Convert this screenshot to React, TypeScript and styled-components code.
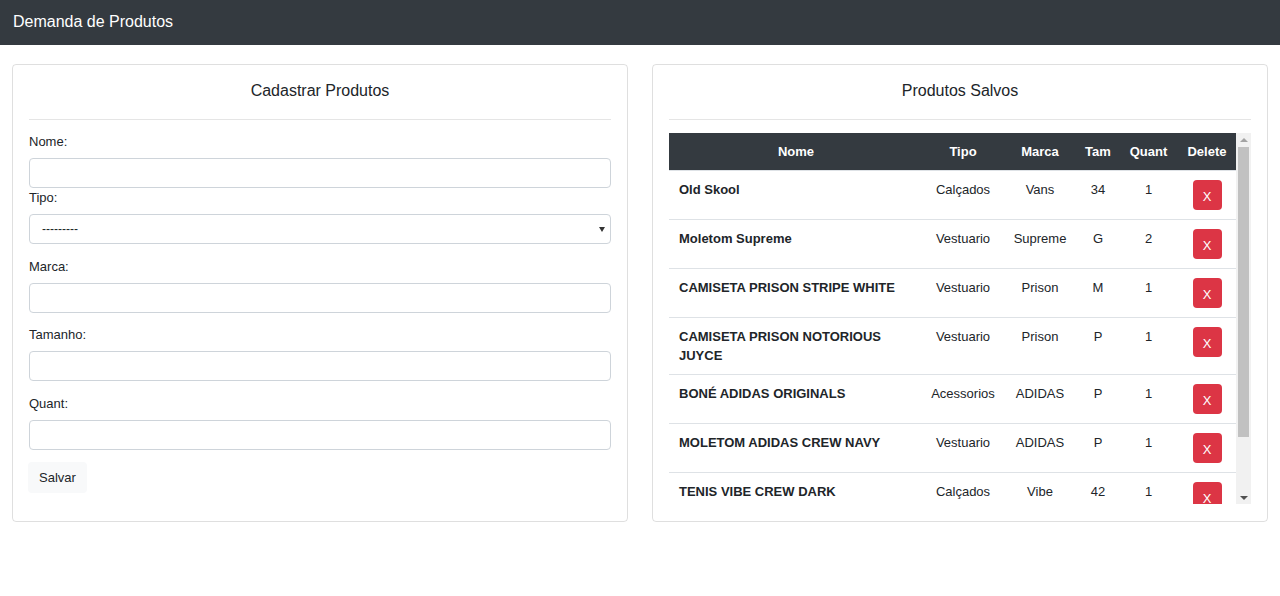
import React from "react";
import styled, { createGlobalStyle } from "styled-components";

const GlobalStyle = createGlobalStyle`
  * { box-sizing: border-box; }
  html, body { margin: 0; padding: 0; background: #fff; }
  body {
    font-family: "Liberation Sans", Arial, Helvetica, sans-serif;
    font-size: 13px;
    line-height: 1.5;
    color: #212529;
  }
`;

const NavBar = styled.header`
  height: 45px;
  background: #343a40;
  display: flex;
  align-items: center;
  padding: 0 13px;
  padding-bottom: 2px;
`;

const Brand = styled.span`
  color: #fff;
  font-size: 16px;
  line-height: 20px;
`;

const Main = styled.main`
  display: grid;
  grid-template-columns: 1fr 1fr;
  gap: 24px;
  padding: 19px 12px 0;
`;

const Card = styled.section`
  border: 1px solid rgba(0, 0, 0, 0.125);
  border-radius: 4px;
  padding: 16px 16px 29px;
  height: 458px;
`;

const CardTitle = styled.h2`
  margin: 0;
  font-size: 16px;
  font-weight: 400;
  line-height: 20px;
  text-align: center;
`;

const Divider = styled.hr`
  border: 0;
  border-top: 1px solid rgba(0, 0, 0, 0.1);
  margin: 18px 0 0;
`;

const Form = styled.form`
  display: flex;
  flex-direction: column;
  padding-top: 12px;
`;

const Group = styled.div<{ $tight?: boolean }>`
  display: flex;
  flex-direction: column;
  margin-bottom: ${(p) => (p.$tight ? "0" : "12.5px")};
`;

const Label = styled.label`
  display: block;
  line-height: 19.5px;
  margin-bottom: 6.5px;
`;

const Input = styled.input`
  height: 30px;
  width: 100%;
  border: 1px solid #ced4da;
  border-radius: 4px;
  padding: 0 12px;
  font: inherit;
  background: #fff;
`;

const SelectWrap = styled.div`
  position: relative;
`;

const Select = styled.select`
  appearance: none;
  -webkit-appearance: none;
  height: 30px;
  width: 100%;
  border: 1px solid #ced4da;
  border-radius: 4px;
  padding: 0 12px;
  font: inherit;
  font-size: 12px;
  color: #212529;
  background: #fff;
`;

const Caret = styled.svg`
  position: absolute;
  right: 6px;
  top: 13px;
  pointer-events: none;
`;

const SaveButton = styled.button`
  align-self: flex-start;
  height: 31px;
  padding: 0 11px;
  margin-left: -1px;
  border: 0;
  border-radius: 4px;
  background: #f8f9fa;
  color: #212529;
  font: inherit;
`;

const TableFrame = styled.div`
  margin-top: 13px;
  height: 371px;
  display: flex;
`;

const TableViewport = styled.div`
  flex: 1;
  min-width: 0;
  overflow: hidden;
`;

const ScrollBar = styled.div`
  width: 15px;
  flex: none;
  background: #f1f1f1;
  display: flex;
  flex-direction: column;
  align-items: center;
`;

const ScrollArrow = styled.div<{ $down?: boolean }>`
  height: 14px;
  width: 15px;
  flex: none;
  display: flex;
  align-items: center;
  justify-content: center;
  &::before {
    content: "";
    width: 0;
    height: 0;
    border-left: 4px solid transparent;
    border-right: 4px solid transparent;
    ${(p) =>
      p.$down
        ? "border-top: 4px solid #505050; margin-top: 2px;"
        : "border-bottom: 4px solid #a3a3a3; margin-top: 0;"}
  }
`;

const ScrollTrack = styled.div`
  flex: 1;
  width: 100%;
  display: flex;
  flex-direction: column;
  align-items: center;
`;

const ScrollThumb = styled.div`
  width: 11px;
  background: #c1c1c1;
`;

const Table = styled.table`
  width: 100%;
  border-collapse: collapse;
  table-layout: fixed;
`;

const Th = styled.th`
  background: #343a40;
  color: #fff;
  font-weight: 700;
  text-align: center;
  line-height: 19px;
  padding: 9px 4px;
`;

const Td = styled.td<{ $name?: boolean }>`
  border-top: 1px solid #dee2e6;
  padding: 9px ${(p) => (p.$name ? "10px" : "2px")};
  line-height: 19px;
  vertical-align: top;
  text-align: ${(p) => (p.$name ? "left" : "center")};
  font-weight: ${(p) => (p.$name ? 700 : 400)};
`;

const DeleteButton = styled.button`
  width: 29px;
  height: 30px;
  border: 0;
  border-radius: 4px;
  background: #dc3545;
  color: #fff;
  font: inherit;
  padding: 2px 0 0;
  line-height: 1;
`;

type Produto = { nome: string; tipo: string; marca: string; tam: string; quant: number };

const produtos: Produto[] = [
  { nome: "Old Skool", tipo: "Calçados", marca: "Vans", tam: "34", quant: 1 },
  { nome: "Moletom Supreme", tipo: "Vestuario", marca: "Supreme", tam: "G", quant: 2 },
  { nome: "CAMISETA PRISON STRIPE WHITE", tipo: "Vestuario", marca: "Prison", tam: "M", quant: 1 },
  { nome: "CAMISETA PRISON NOTORIOUS JUYCE", tipo: "Vestuario", marca: "Prison", tam: "P", quant: 1 },
  { nome: "BONÉ ADIDAS ORIGINALS", tipo: "Acessorios", marca: "ADIDAS", tam: "P", quant: 1 },
  { nome: "MOLETOM ADIDAS CREW NAVY", tipo: "Vestuario", marca: "ADIDAS", tam: "P", quant: 1 },
  { nome: "TENIS VIBE CREW DARK", tipo: "Calçados", marca: "Vibe", tam: "42", quant: 1 },
];

export default function App() {
  return (
    <>
      <GlobalStyle />
      <NavBar>
        <Brand>Demanda de Produtos</Brand>
      </NavBar>
      <Main>
        <Card>
          <CardTitle>Cadastrar Produtos</CardTitle>
          <Divider />
          <Form onSubmit={(e) => e.preventDefault()}>
            <Group $tight>
              <Label>Nome:</Label>
              <Input type="text" />
            </Group>
            <Group>
              <Label>Tipo:</Label>
              <SelectWrap>
                <Select defaultValue="">
                  <option value="">---------</option>
                  <option>Calçados</option>
                  <option>Vestuario</option>
                  <option>Acessorios</option>
                </Select>
                <Caret width="6" height="5" viewBox="0 0 6 5">
                  <path d="M0 0 H6 L3 5 Z" fill="#333" />
                </Caret>
              </SelectWrap>
            </Group>
            <Group>
              <Label>Marca:</Label>
              <Input type="text" />
            </Group>
            <Group>
              <Label>Tamanho:</Label>
              <Input type="text" />
            </Group>
            <Group>
              <Label>Quant:</Label>
              <Input type="text" />
            </Group>
            <SaveButton type="submit">Salvar</SaveButton>
          </Form>
        </Card>
        <Card>
          <CardTitle>Produtos Salvos</CardTitle>
          <Divider />
          <TableFrame>
            <TableViewport>
              <Table>
                <colgroup>
                  <col style={{ width: 254 }} />
                  <col style={{ width: 80 }} />
                  <col style={{ width: 74 }} />
                  <col style={{ width: 42 }} />
                  <col style={{ width: 59 }} />
                  <col />
                </colgroup>
                <thead>
                  <tr>
                    <Th>Nome</Th>
                    <Th>Tipo</Th>
                    <Th>Marca</Th>
                    <Th>Tam</Th>
                    <Th>Quant</Th>
                    <Th>Delete</Th>
                  </tr>
                </thead>
                <tbody>
                  {produtos.map((p) => (
                    <tr key={p.nome}>
                      <Td $name>{p.nome}</Td>
                      <Td>{p.tipo}</Td>
                      <Td>{p.marca}</Td>
                      <Td>{p.tam}</Td>
                      <Td>{p.quant}</Td>
                      <Td>
                        <DeleteButton>X</DeleteButton>
                      </Td>
                    </tr>
                  ))}
                </tbody>
              </Table>
            </TableViewport>
            <ScrollBar aria-hidden="true">
              <ScrollArrow />
              <ScrollTrack>
                <ScrollThumb style={{ height: 290 }} />
              </ScrollTrack>
              <ScrollArrow $down />
            </ScrollBar>
          </TableFrame>
        </Card>
      </Main>
    </>
  );
}
